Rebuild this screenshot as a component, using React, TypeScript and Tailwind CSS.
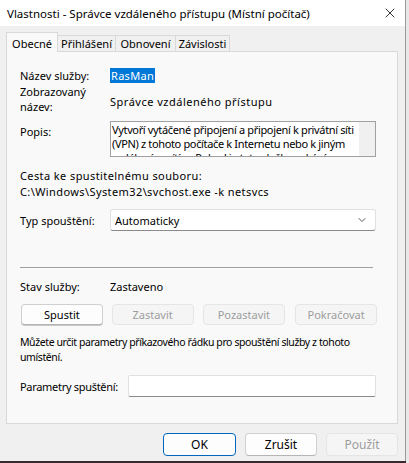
import React from 'react';
import { ChevronDown, X } from 'lucide-react';

const font = { fontFamily: '"Noto Sans", "Liberation Sans", sans-serif' };

const Btn = ({ label, disabled, primary, className = '' }: { label: string; disabled?: boolean; primary?: boolean; className?: string }) => (
    <div
        className={`flex items-center justify-center whitespace-nowrap rounded-[4px] border ${
            primary
                ? 'border-[#0067c0] bg-[#fdfdfd] text-black'
                : disabled
                ? 'border-[#e5e5e5] bg-[#f5f5f5] text-[#9d9d9d]'
                : 'border-[#d0d0d0] border-b-[#b5b5b5] bg-[#fdfdfd] text-black'
        } ${className}`}
    >
        {label}
    </div>
);

export default function App() {
    return (
        <div className="flex h-[463px] w-[409px] overflow-hidden bg-[#3a2a30]" style={font}>
            <div className="flex h-[461px] w-[406px] shrink-0 flex-col border-r border-[#9a9a9a] bg-[#f0f0f0] text-[11px] leading-[15px] text-black">
                {/* Title bar */}
                <div className="flex h-[26px] shrink-0 items-center justify-between bg-white pl-[7px] pr-[7px]">
                    <span className="whitespace-nowrap text-[11.5px]">Vlastnosti - Správce vzdáleného přístupu (Místní počítač)</span>
                    <X size={16} strokeWidth={1.2} />
                </div>

                <div className="flex flex-1 flex-col px-[6px] pt-[6px]">
                    {/* Tabs */}
                    <div className="relative z-10 -mb-px flex h-[20px] items-end whitespace-nowrap">
                        <div className="flex h-[20px] w-[52px] items-center justify-center border border-b-0 border-[#d9d9d9] bg-[#f9f9f9] pt-[1px]">Obecné</div>
                        <div className="flex h-[17px] w-[58px] items-center justify-center border border-l-0 border-[#d9d9d9] bg-[#f0f0f0]">Přihlášení</div>
                        <div className="flex h-[17px] w-[60px] items-center justify-center border border-l-0 border-[#d9d9d9] bg-[#f0f0f0]">Obnovení</div>
                        <div className="flex h-[17px] w-[54px] items-center justify-center border border-l-0 border-[#d9d9d9] bg-[#f0f0f0]">Závislosti</div>
                    </div>

                    {/* Panel */}
                    <div className="flex h-[373px] w-[392px] flex-col border border-[#d9d9d9] bg-[#f9f9f9] pl-[13px] pr-[20px]">
                        <div className="mt-[16px] flex">
                            <div className="w-[90px]">Název služby:</div>
                            <div className="bg-[#0078d7] px-[1px] tracking-[0.3px] text-white">RasMan</div>
                        </div>

                        <div className="mt-[1px] flex">
                            <div className="w-[90px]">
                                Zobrazovaný
                                <br />
                                název:
                            </div>
                            <div className="mt-[10px] tracking-[0.5px]">Správce vzdáleného přístupu</div>
                        </div>

                        <div className="mt-[7px] flex">
                            <div className="mt-[3px] w-[90px]">Popis:</div>
                            <div className="flex h-[36px] w-[266px] overflow-hidden border border-[#a0a0a0] bg-white">
                                <div className="min-w-0 flex-1 overflow-hidden whitespace-nowrap pl-[1px] pt-[1px] leading-[14px] tracking-[-0.35px]">
                                    Vytvoří vytáčené připojení a připojení k privátní síti
                                    <br />
                                    (VPN) z tohoto počítače k Internetu nebo k jiným
                                    <br />
                                    vzdáleným sítím. Pokud je tato služba zakázána
                                </div>
                                <div className="w-[16px] shrink-0 bg-[#f0f0f0]" />
                            </div>
                        </div>

                        <div className="mt-[11px] tracking-[0.4px]">Cesta ke spustitelnému souboru:</div>
                        <div className="mt-[1px] tracking-[0.4px]">C:\Windows\System32\svchost.exe -k netsvcs</div>

                        <div className="mt-[10px] flex items-center">
                            <div className="w-[90px]">Typ spouštění:</div>
                            <div className="flex h-[22px] w-[266px] items-center justify-between rounded-[3px] border border-[#e0e0e0] border-b-[#8a8a8a] bg-white pl-[4px] pr-[7px]">
                                <span>Automaticky</span>
                                <ChevronDown size={12} strokeWidth={1.3} />
                            </div>
                        </div>

                        <div className="mt-[36px] h-px w-[353px] bg-[#a0a0a0]" />

                        <div className="mt-[11px] flex">
                            <div className="w-[90px]">Stav služby:</div>
                            <div>Zastaveno</div>
                        </div>

                        <div className="mt-[10px] flex gap-[9px] pl-[1px]">
                            <Btn label="Spustit" className="h-[21px] w-[82px] shadow-[0_1px_0_#c8c8c8]" />
                            <Btn label="Zastavit" disabled className="h-[21px] w-[82px]" />
                            <Btn label="Pozastavit" disabled className="h-[21px] w-[83px]" />
                            <Btn label="Pokračovat" disabled className="ml-[1px] h-[21px] w-[82px]" />
                        </div>

                        <div className="mt-[10px] whitespace-nowrap text-[10.5px] tracking-[-0.4px]">
                            Můžete určit parametry příkazového řádku pro spouštění služby z tohoto
                            <br />
                            umístění.
                        </div>

                        <div className="mt-[10px] flex items-center">
                            <div className="w-[108px] whitespace-nowrap tracking-[-0.3px]">Parametry spuštění:</div>
                            <div className="h-[22px] w-[248px] rounded-[2px] border border-[#e0e0e0] border-b-[#8a8a8a] bg-white" />
                        </div>
                    </div>

                    {/* Footer */}
                    <div className="mt-[9px] flex justify-end gap-[9px] pr-[1px] text-[12px]">
                        <Btn label="OK" primary className="h-[23px] w-[73px] border-[1.5px]" />
                        <Btn label="Zrušit" className="h-[23px] w-[72px]" />
                        <Btn label="Použít" disabled className="h-[23px] w-[72px]" />
                    </div>
                </div>
            </div>
            <div className="flex-1 bg-[#e8e8e8]" />
        </div>
    );
}
